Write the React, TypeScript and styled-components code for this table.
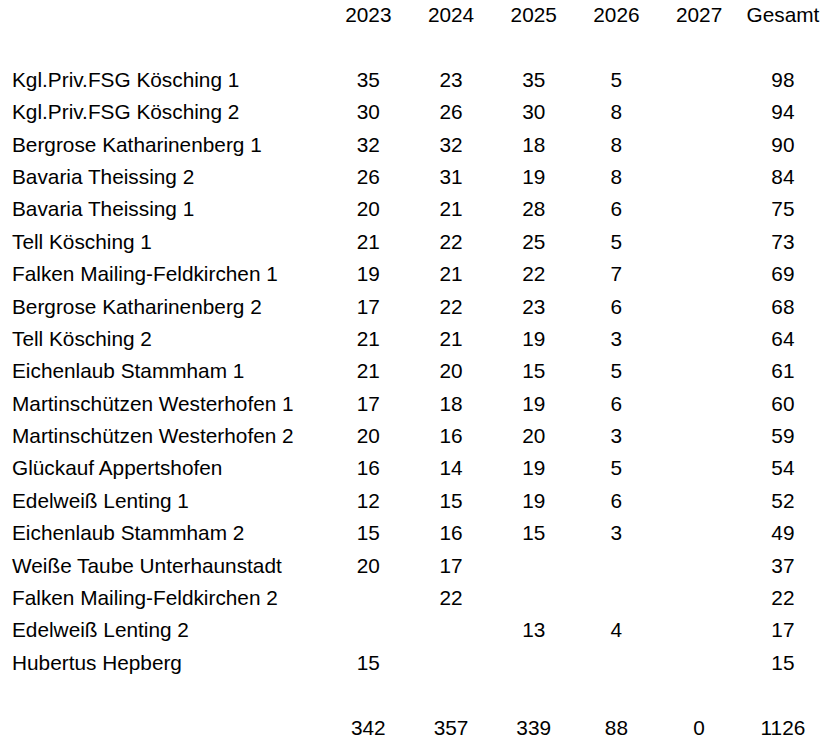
import React from "react";
import styled, { createGlobalStyle } from "styled-components";

const GlobalStyle = createGlobalStyle`
  html, body {
    margin: 0;
    padding: 0;
    background: #ffffff;
  }
  body {
    font-family: "Liberation Sans", Arial, sans-serif;
    color: #000000;
  }
`;

const Sheet = styled.div`
  display: flex;
  flex-direction: column;
  width: 829px;
  margin-top: -1px;
`;

const Row = styled.div`
  display: grid;
  grid-template-columns: 327px repeat(5, 82.7px) 85px;
  height: 32.4px;
  line-height: 32.4px;
  font-size: 20.8px;
  white-space: nowrap;
`;

const NameCell = styled.div`
  padding-left: 12px;
`;

const NumCell = styled.div`
  text-align: center;
`;

type Team = {
  name: string;
  years: (number | null)[];
};

const YEARS = ["2023", "2024", "2025", "2026", "2027"];

const teams: Team[] = [
  { name: "Kgl.Priv.FSG Kösching 1", years: [35, 23, 35, 5, null] },
  { name: "Kgl.Priv.FSG Kösching 2", years: [30, 26, 30, 8, null] },
  { name: "Bergrose Katharinenberg 1", years: [32, 32, 18, 8, null] },
  { name: "Bavaria Theissing 2", years: [26, 31, 19, 8, null] },
  { name: "Bavaria Theissing 1", years: [20, 21, 28, 6, null] },
  { name: "Tell Kösching 1", years: [21, 22, 25, 5, null] },
  { name: "Falken Mailing-Feldkirchen 1", years: [19, 21, 22, 7, null] },
  { name: "Bergrose Katharinenberg 2", years: [17, 22, 23, 6, null] },
  { name: "Tell Kösching 2", years: [21, 21, 19, 3, null] },
  { name: "Eichenlaub Stammham 1", years: [21, 20, 15, 5, null] },
  { name: "Martinschützen Westerhofen 1", years: [17, 18, 19, 6, null] },
  { name: "Martinschützen Westerhofen 2", years: [20, 16, 20, 3, null] },
  { name: "Glückauf Appertshofen", years: [16, 14, 19, 5, null] },
  { name: "Edelweiß Lenting 1", years: [12, 15, 19, 6, null] },
  { name: "Eichenlaub Stammham 2", years: [15, 16, 15, 3, null] },
  { name: "Weiße Taube Unterhaunstadt", years: [20, 17, null, null, null] },
  { name: "Falken Mailing-Feldkirchen 2", years: [null, 22, null, null, null] },
  { name: "Edelweiß Lenting 2", years: [null, null, 13, 4, null] },
  { name: "Hubertus Hepberg", years: [15, null, null, null, null] },
];

// totals as shown on the sheet
const totals = [342, 357, 339, 88, 0];
const grandTotal = 1126;

const sum = (list: (number | null)[]) =>
  list.reduce<number>((acc, v) => acc + (v ?? 0), 0);

const App = () => {
  return (
    <>
      <GlobalStyle />
      <Sheet>
        <Row>
          <NameCell />
          {YEARS.map(year => (
            <NumCell key={year}>{year}</NumCell>
          ))}
          <NumCell>Gesamt</NumCell>
        </Row>
        <Row />
        {teams.map(team => (
          <Row key={team.name}>
            <NameCell>{team.name}</NameCell>
            {team.years.map((value, i) => (
              <NumCell key={i}>{value ?? ""}</NumCell>
            ))}
            <NumCell>{sum(team.years)}</NumCell>
          </Row>
        ))}
        <Row />
        <Row>
          <NameCell />
          {totals.map((total, i) => (
            <NumCell key={i}>{total}</NumCell>
          ))}
          <NumCell>{grandTotal}</NumCell>
        </Row>
      </Sheet>
    </>
  );
};

export default App;
